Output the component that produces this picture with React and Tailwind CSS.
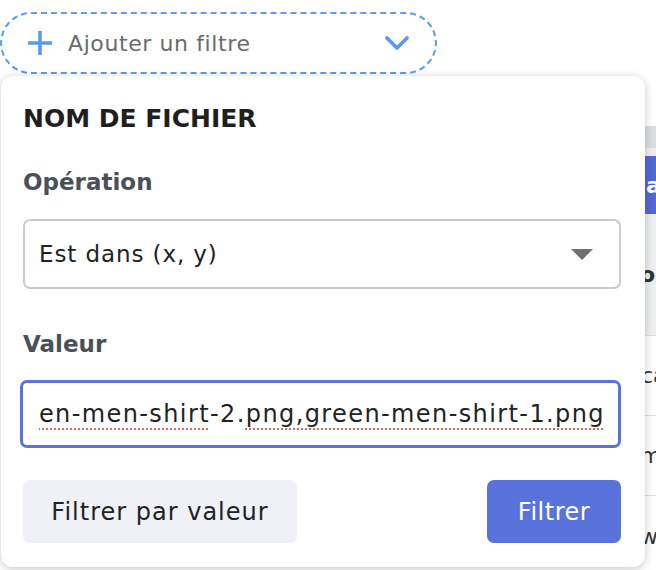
import React from 'react';

const font = { fontFamily: '"DejaVu Sans", "Noto Sans", sans-serif' };

function BackgroundTable() {
  return (
    <div className="ml-[560px] mt-[52px] flex flex-col">
      <div className="h-[22px] bg-[#dcdde0]" />
      <div className="h-[8px] bg-[#eeeef0]" />
      <div className="flex h-[58px] items-center bg-[#5468d4] pl-[86px] text-[22px] font-semibold text-white">
        at
      </div>
      <div className="flex h-[122px] items-center border-b border-[#dcdcdc] bg-[#eeeff1] pl-[80px] text-[22px] font-bold text-[#333]">
        on
      </div>
      <div className="flex h-[80px] items-center border-b border-[#dcdcdc] pl-[81px] text-[22px] text-[#333]">
        ca
      </div>
      <div className="flex h-[80px] items-center border-b border-[#dcdcdc] pl-[80px] text-[22px] text-[#333]">
        mi
      </div>
      <div className="flex h-[80px] items-center pl-[80px] text-[22px] text-[#333]">
        wa
      </div>
    </div>
  );
}

export default function App() {
  return (
    <div className="relative h-[570px] w-[656px] overflow-hidden bg-white" style={font}>
      <div className="pt-[12px]">
        <button
          type="button"
          className="flex h-[62px] w-[437px] items-center rounded-full border-2 border-dashed border-[#5b9de8] pl-[25px] pr-[25px] text-left"
        >
          <svg width="26" height="26" viewBox="0 0 26 26" className="shrink-0">
            <path d="M13 1v24M1 13h24" stroke="#5a9be6" strokeWidth="3.6" fill="none" />
          </svg>
          <span className="ml-[15px] flex-1 text-[22px] tracking-[0.6px] text-[#6b6b6b]">Ajouter un filtre</span>
          <svg width="26" height="16" viewBox="0 0 26 16" className="shrink-0">
            <path d="M3 3l10 10 10-10" stroke="#5a9be6" strokeWidth="3.8" strokeLinecap="round" strokeLinejoin="round" fill="none" />
          </svg>
        </button>
      </div>

      <BackgroundTable />

      <div className="absolute left-[1px] top-[76px] flex h-[491px] w-[644px] flex-col rounded-[12px] bg-white pl-[22px] pr-[24px] pt-[26px] shadow-[0_2px_10px_rgba(0,0,0,0.22)]">
        <h2 className="text-[25px] font-bold leading-[34px] text-[#1f1f1f]">NOM DE FICHIER</h2>

        <label className="mt-[31px] text-[23px] font-bold leading-[30px] text-[#4a5058]">Opération</label>
        <div className="mt-[22px] flex h-[70px] items-center justify-between rounded-[7px] border-2 border-[#cbcbcb] pl-[14px] pr-[26px]">
          <span className="text-[23px] tracking-[0.9px] text-[#222]">Est dans (x, y)</span>
          <svg width="22" height="11" viewBox="0 0 22 11">
            <path d="M0 0 L22 0 L11 11 Z" fill="#6f6f6f" />
          </svg>
        </div>

        <label className="mt-[40px] text-[23px] font-bold leading-[30px] text-[#4a5058]">Valeur</label>
        <div className="mt-[21px] -ml-[3px] flex h-[68px] items-center rounded-[7px] border-[3px] border-[#5a73dc] pl-[16px] pr-[13px]">
          <div className="flex h-[40px] flex-1 items-center justify-end overflow-hidden">
            <span className="shrink-0 whitespace-nowrap text-[24px] tracking-[1.4px] text-[#222]">
              <span className="underline decoration-dotted decoration-[#e8645a] decoration-2 underline-offset-[6px]">en-men-shirt</span>
              -2.
              <span className="underline decoration-dotted decoration-[#e8645a] decoration-2 underline-offset-[6px]">png,green-men-shirt-1.png</span>
            </span>
          </div>
        </div>

        <div className="mt-[32px] flex items-center justify-between">
          <button
            type="button"
            className="h-[63px] w-[274px] rounded-[7px] bg-[#f0f1f6] text-[24px] tracking-[1px] text-[#222]"
          >
            Filtrer par valeur
          </button>
          <button
            type="button"
            className="h-[63px] w-[134px] rounded-[7px] bg-[#5a73dc] text-[24px] tracking-[0.5px] text-white"
          >
            Filtrer
          </button>
        </div>
      </div>
    </div>
  );
}
